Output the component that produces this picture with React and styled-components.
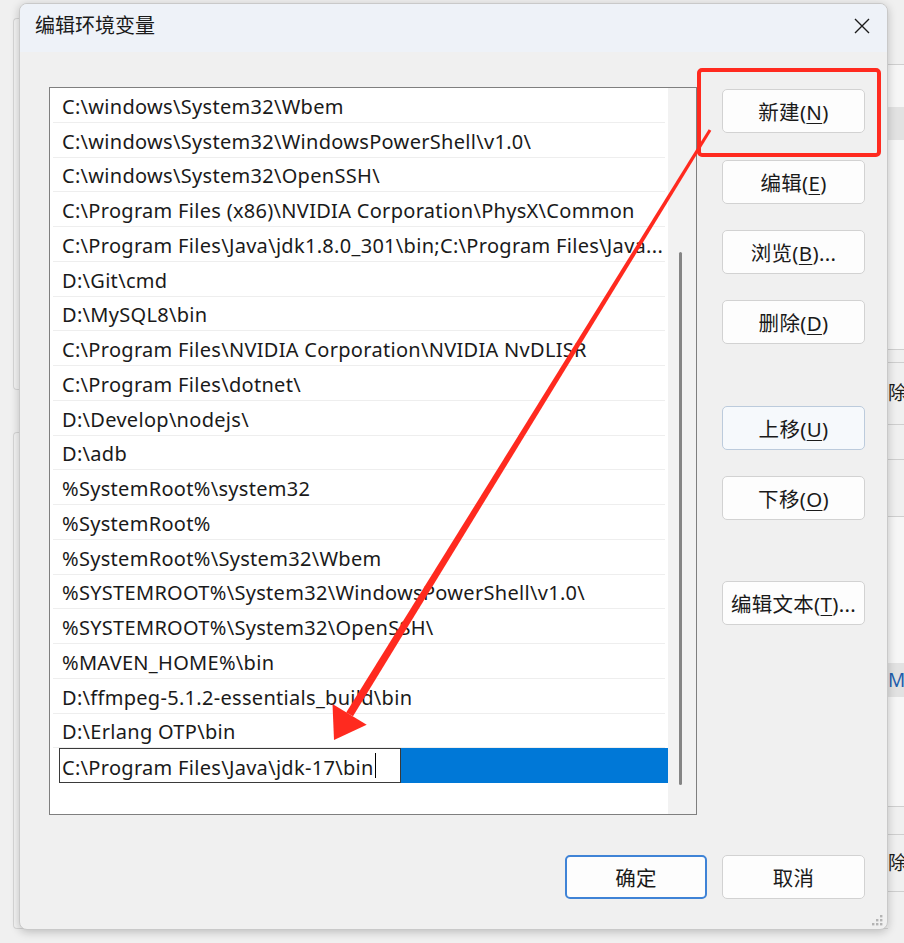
import React from 'react'
import styled, { createGlobalStyle } from 'styled-components'

const GlobalStyle = createGlobalStyle`
  html, body {
    margin: 0;
    padding: 0;
    background: #f0f0f0;
  }
  body {
    font-family: "Noto Sans", "Noto Sans CJK SC", sans-serif;
    overflow: hidden;
  }
`

const paths = [
  'C:\\windows\\System32\\Wbem',
  'C:\\windows\\System32\\WindowsPowerShell\\v1.0\\',
  'C:\\windows\\System32\\OpenSSH\\',
  'C:\\Program Files (x86)\\NVIDIA Corporation\\PhysX\\Common',
  'C:\\Program Files\\Java\\jdk1.8.0_301\\bin;C:\\Program Files\\Java...',
  'D:\\Git\\cmd',
  'D:\\MySQL8\\bin',
  'C:\\Program Files\\NVIDIA Corporation\\NVIDIA NvDLISR',
  'C:\\Program Files\\dotnet\\',
  'D:\\Develop\\nodejs\\',
  'D:\\adb',
  '%SystemRoot%\\system32',
  '%SystemRoot%',
  '%SystemRoot%\\System32\\Wbem',
  '%SYSTEMROOT%\\System32\\WindowsPowerShell\\v1.0\\',
  '%SYSTEMROOT%\\System32\\OpenSSH\\',
  '%MAVEN_HOME%\\bin',
  'D:\\ffmpeg-5.1.2-essentials_build\\bin',
  'D:\\Erlang OTP\\bin',
]

const editingPath = 'C:\\Program Files\\Java\\jdk-17\\bin'

const sideButtons = [
  { label: '新建', hotkey: 'N', gap: 0 },
  { label: '编辑', hotkey: 'E', gap: 27 },
  { label: '浏览', hotkey: 'B', suffix: '...', gap: 26 },
  { label: '删除', hotkey: 'D', gap: 26 },
  { label: '上移', hotkey: 'U', gap: 62, focused: true },
  { label: '下移', hotkey: 'O', gap: 26 },
  { label: '编辑文本', hotkey: 'T', suffix: '...', gap: 61 },
]

// stripes of the window behind, visible at the right edge
const backStripes = [
  { h: 65, line: true },
  { h: 42, bg: '#f6f6f6' },
  { h: 33, bg: '#e2e2e2' },
  { h: 210, bg: '#f6f6f6', line: true },
  { h: 13, line: true },
  { h: 62, text: '除', line: true },
  { h: 35, line: true },
  { h: 57, line: true },
  { h: 146, bg: '#f6f6f6' },
  { h: 34, bg: '#e2e2e2', text: 'M', blue: true },
  { h: 110, bg: '#f6f6f6', line: true },
  { h: 28, line: true },
  { h: 57, text: '除', line: true },
]

function Hotkey({ label, hotkey, suffix }) {
  return (
    <ButtonLabel>
      {label}(<u>{hotkey}</u>){suffix}
    </ButtonLabel>
  )
}

export default function App() {
  return (
    <Desktop>
      <GlobalStyle />

      <BackWindow>
        <BackLeft />
        <BackGroups>
          <GroupBox $h={370} />
          <GroupBox $h={495} />
        </BackGroups>
        <BackStrip>
          {backStripes.map((s, i) => (
            <Stripe key={i} $h={s.h} $bg={s.bg} $line={s.line} $blue={s.blue}>
              {s.text}
            </Stripe>
          ))}
        </BackStrip>
      </BackWindow>

      <Dialog>
        <TitleBar>
          <Title>编辑环境变量</Title>
          <CloseButton>
            <svg width="18" height="18" viewBox="0 0 18 18">
              <path d="M2 2 L16 16 M16 2 L2 16" stroke="#1b1b1b" strokeWidth="1.4" fill="none" />
            </svg>
          </CloseButton>
        </TitleBar>

        <Body>
          <ListBox>
            <Rows>
              {paths.map((p) => (
                <Row key={p}>
                  <RowText>{p}</RowText>
                </Row>
              ))}
              <SelectedRow>
                <EditBox>
                  <RowText>{editingPath}</RowText>
                  <Caret />
                </EditBox>
                <Highlight />
              </SelectedRow>
            </Rows>
            <ScrollTrack>
              <ScrollThumb />
            </ScrollTrack>
          </ListBox>

          <SideColumn>
            {sideButtons.map((b) => (
              <SideButton key={b.label} $gap={b.gap} $focused={b.focused}>
                <Hotkey {...b} />
              </SideButton>
            ))}
          </SideColumn>
        </Body>

        <Footer>
          <DialogButton $primary>
            <ButtonLabel>确定</ButtonLabel>
          </DialogButton>
          <DialogButton>
            <ButtonLabel>取消</ButtonLabel>
          </DialogButton>
        </Footer>

        <Grip>
          <svg width="16" height="16" viewBox="0 0 16 16">
            {[[12, 4], [8, 8], [12, 8], [4, 12], [8, 12], [12, 12]].map(([x, y]) => (
              <rect key={`${x}-${y}`} x={x} y={y} width="2.4" height="2.4" fill="#b4b4b4" />
            ))}
          </svg>
        </Grip>
      </Dialog>

      <Annotation viewBox="0 0 904 943" width="904" height="943">
        <rect x="699" y="70" width="180" height="85" rx="3" fill="none" stroke="#ff2a1f" strokeWidth="4" />
        <polygon points="708.7,129.2 711.3,130.8 353,716.2 346.2,712.6" fill="#ff2a1f" />
        <polygon points="334,740 332.5,704 366.7,724.8" fill="#ff2a1f" />
      </Annotation>
    </Desktop>
  )
}

const Desktop = styled.div`
  position: relative;
  width: 904px;
  height: 943px;
  overflow: hidden;
  background: #f0f0f0;
`

const BackWindow = styled.div`
  position: absolute;
  inset: 0;
  display: grid;
  grid-template-columns: 13px 1fr 16px;
  background: #f0f0f0;
`

const BackLeft = styled.div`
  background: #f0f0f0;
`

const BackGroups = styled.div`
  display: flex;
  flex-direction: column;
  gap: 42px;
  padding-top: 18px;
`

const GroupBox = styled.div`
  height: ${(p) => p.$h}px;
  border: 1px solid #d6d6d6;
  border-right: none;
  border-radius: 4px 0 0 4px;
  background: #f3f3f3;
`

const BackStrip = styled.div`
  display: flex;
  flex-direction: column;
  background: #f0f0f0;
  overflow: hidden;
`

const Stripe = styled.div`
  height: ${(p) => p.$h}px;
  flex-shrink: 0;
  box-sizing: border-box;
  background: ${(p) => p.$bg || '#f0f0f0'};
  border-bottom: ${(p) => (p.$line ? '1px solid #cfcfcf' : 'none')};
  display: flex;
  align-items: center;
  font-size: 19px;
  line-height: 1;
  color: ${(p) => (p.$blue ? '#1f5fae' : '#1a1a1a')};
  white-space: nowrap;
  overflow: hidden;
`

const Dialog = styled.div`
  position: absolute;
  left: 19px;
  top: 3px;
  width: 869px;
  height: 927px;
  box-sizing: border-box;
  display: flex;
  flex-direction: column;
  background: #f0f0f0;
  border: 1px solid #c9c9c9;
  border-radius: 8px;
  box-shadow: 0 2px 10px rgba(0, 0, 0, 0.22);
  overflow: hidden;
`

const TitleBar = styled.div`
  height: 48px;
  flex-shrink: 0;
  display: flex;
  align-items: center;
  justify-content: space-between;
  padding: 0 14px 8px 15px;
  box-sizing: border-box;
  background: #eef2f8;
`

const Title = styled.div`
  font-size: 20px;
  color: #1a1a1a;
`

const CloseButton = styled.div`
  width: 22px;
  height: 22px;
  margin-top: 4px;
  display: flex;
  align-items: center;
  justify-content: center;
`

const Body = styled.div`
  display: flex;
  gap: 25px;
  padding: 35px 22px 0 29px;
`

const ListBox = styled.div`
  width: 648px;
  height: 728px;
  box-sizing: border-box;
  border: 1px solid #7f7f7f;
  background: #ffffff;
  display: flex;
`

const Rows = styled.div`
  flex: 1;
  min-width: 0;
  display: flex;
  flex-direction: column;
`

const Row = styled.div`
  height: 34.75px;
  box-sizing: border-box;
  margin: 0 3px;
  padding: 3px 3px 0 9px;
  border-bottom: 1px solid #eeeeee;
  display: flex;
  align-items: center;
  min-width: 0;
`

const RowText = styled.span`
  font-size: 20px;
  color: #1a1a1a;
  white-space: nowrap;
  overflow: hidden;
  letter-spacing: 0.3px;
`

const SelectedRow = styled.div`
  height: 34.75px;
  display: flex;
  padding-left: 9px;
`

const EditBox = styled.div`
  width: 342px;
  box-sizing: border-box;
  border: 1px solid #3a3a3a;
  background: #ffffff;
  padding: 3px 0 0 2px;
  display: flex;
  align-items: center;
  overflow: hidden;
`

const Caret = styled.span`
  display: inline-block;
  flex-shrink: 0;
  width: 1.5px;
  height: 25px;
  margin: -3px 0 0 1px;
  background: #000000;
`

const Highlight = styled.div`
  flex: 1;
  background: #0078d7;
`

const ScrollTrack = styled.div`
  width: 28px;
  flex-shrink: 0;
  background: #f2f2f2;
  padding-top: 164px;
  box-sizing: border-box;
`

const ScrollThumb = styled.div`
  width: 3px;
  height: 533px;
  margin-left: 11px;
  border-radius: 2px;
  background: #858585;
`

const SideColumn = styled.div`
  display: flex;
  flex-direction: column;
  padding-top: 2px;
`

const ButtonBase = styled.div`
  width: 143px;
  height: 44px;
  box-sizing: border-box;
  display: flex;
  align-items: center;
  justify-content: center;
  border-radius: 5px;
  background: #fdfdfd;
`

const ButtonLabel = styled.span`
  font-size: 20.5px;
  letter-spacing: 0.3px;
  color: #1a1a1a;
  white-space: nowrap;

  u {
    text-decoration-thickness: 1px;
    text-underline-offset: 3px;
  }
`

const SideButton = styled(ButtonBase)`
  margin-top: ${(p) => p.$gap}px;
  border: 1px solid ${(p) => (p.$focused ? '#bccbdc' : '#d2d2d2')};
  background: ${(p) => (p.$focused ? '#f6f9fc' : '#fdfdfd')};
`

const Footer = styled.div`
  display: flex;
  justify-content: flex-end;
  gap: 15px;
  padding: 40px 22px 0 0;
`

const DialogButton = styled(ButtonBase)`
  width: ${(p) => (p.$primary ? '142px' : '143px')};
  border: ${(p) => (p.$primary ? '2px solid #3f83d6' : '1px solid #d2d2d2')};
`

const Grip = styled.div`
  position: absolute;
  right: 3px;
  bottom: 3px;
  width: 16px;
  height: 16px;
`

const Annotation = styled.svg`
  position: absolute;
  left: 0;
  top: 0;
  pointer-events: none;
`
